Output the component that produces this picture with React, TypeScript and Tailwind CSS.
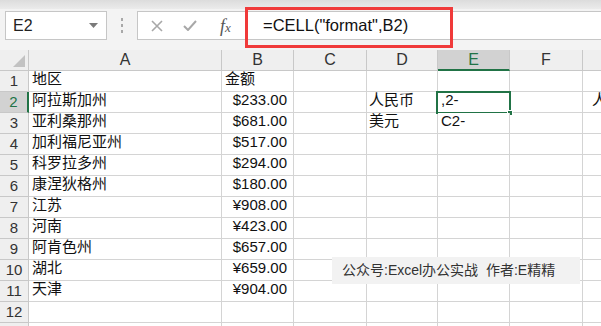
import React from 'react';

const FONT = { fontFamily: '"Liberation Sans", "Noto Sans CJK SC", sans-serif' };

const regions = ['地区', '阿拉斯加州', '亚利桑那州', '加利福尼亚州', '科罗拉多州', '康涅狄格州', '江苏', '河南', '阿肯色州', '湖北', '天津'];
const amounts = ['金额', '$233.00', '$681.00', '$517.00', '$294.00', '$180.00', '¥908.00', '¥423.00', '$657.00', '¥659.00', '¥904.00'];
const colLetters = ['A', 'B', 'C', 'D', 'E', 'F', ''];

const cellBase = 'h-[21px] border-r border-b border-[#d4d4d4] bg-white text-[15px] text-[#111] flex items-end pb-[1px] overflow-visible whitespace-nowrap';

export default function App() {
  const rows = Array.from({ length: 13 }, (_, i) => i + 1);

  return (
    <div className="relative w-[601px] h-[326px] overflow-hidden bg-white" style={FONT}>
      {/* toolbar */}
      <div className="h-[50px] bg-[#f3f3f3] flex flex-col">
        <div className="h-[9px] bg-gradient-to-b from-[#dcdcdc] to-[#ebebeb]" />
        <div className="flex items-start pt-[2px]">
          <div className="ml-[5px] w-[102px] h-[29px] bg-white border border-[#c6c6c6] flex items-center justify-between pl-[7px] pr-[8px]">
            <span className="text-[16px] text-[#222]">E2</span>
            <svg width="9" height="5" viewBox="0 0 9 5"><path d="M0 0h9L4.5 5z" fill="#7a7a7a" /></svg>
          </div>
          <div className="w-[30px] h-[29px] flex flex-col items-center justify-center gap-[3px]">
            <div className="w-[2px] h-[3px] bg-[#a8a8a8]" />
            <div className="w-[2px] h-[3px] bg-[#a8a8a8]" />
            <div className="w-[2px] h-[3px] bg-[#a8a8a8]" />
          </div>
          <div className="flex-1 h-[29px] bg-white border border-r-0 border-[#c6c6c6] flex items-center">
            <div className="w-[108px] flex items-center">
              <svg className="ml-[13px]" width="12" height="12" viewBox="0 0 12 12">
                <path d="M1 1L11 11M11 1L1 11" stroke="#a8a8a8" strokeWidth="1.6" />
              </svg>
              <svg className="ml-[20px]" width="14" height="11" viewBox="0 0 14 11">
                <path d="M1 6l4 4L13 1" stroke="#a8a8a8" strokeWidth="2" fill="none" />
              </svg>
              <span className="ml-[23px] text-[18px] italic text-[#555] leading-none" style={{ fontFamily: '"Liberation Serif", serif' }}>
                f<span className="text-[13px]">x</span>
              </span>
            </div>
            <span className="ml-[17px] text-[16.5px] text-[#111]">=CELL("format",B2)</span>
          </div>
        </div>
      </div>

      {/* red highlight around formula */}
      <div className="absolute left-[245px] top-[7px] w-[208px] h-[41px] border-[3px] border-[#f03a3a]" />

      {/* sheet */}
      <div className="grid grid-cols-[29px_193px_72px_73px_71px_72px_73px_1fr]">
        {/* header row */}
        <div className="h-[21px] bg-[#efefef] border-r border-b border-[#c8c8c8] relative">
          <svg className="absolute right-[3px] bottom-[3px]" width="12" height="12" viewBox="0 0 12 12">
            <path d="M12 0V12H0z" fill="#c2c2c2" />
          </svg>
        </div>
        {colLetters.map((c, i) => (
          <div
            key={i}
            className={
              c === 'E'
                ? 'h-[21px] bg-[#d2d2d2] border-r border-[#c8c8c8] border-b-2 border-b-[#217346] flex items-center justify-center text-[16px] text-[#217346]'
                : 'h-[21px] bg-[#efefef] border-r border-b border-[#c8c8c8] flex items-center justify-center text-[16px] text-[#333]'
            }
          >
            {c}
          </div>
        ))}

        {rows.map((r) => {
          const a = regions[r - 1] ?? '';
          const b = amounts[r - 1] ?? '';
          const sel = r === 2;
          return (
            <React.Fragment key={r}>
              <div
                className={
                  sel
                    ? 'h-[21px] bg-[#d2d2d2] border-b border-[#c8c8c8] border-r-2 border-r-[#217346] flex items-center justify-center text-[15px] text-[#217346]'
                    : 'h-[21px] bg-[#efefef] border-r border-b border-[#c8c8c8] flex items-center justify-center text-[15px] text-[#333]'
                }
              >
                {r < 13 ? r : ''}
              </div>
              <div className={`${cellBase} pl-[3px]`}>{a}</div>
              <div className={`${cellBase} ${r === 1 ? 'pl-[3px]' : 'justify-end pr-[6px] text-[14.5px]'}`}>{b}</div>
              <div className={cellBase} />
              <div className={`${cellBase} pl-[2px]`}>{r === 2 ? '人民币' : r === 3 ? '美元' : ''}</div>
              <div className={`${cellBase} pl-[3px] relative`}>
                {r === 2 ? ',2-' : r === 3 ? 'C2-' : ''}
                {sel && (
                  <div className="absolute left-[-2px] top-[-1px] w-[75px] h-[23px] border-2 border-[#217346]">
                    <div className="absolute right-[-4px] bottom-[-4px] w-[6px] h-[6px] bg-[#217346] border border-white" />
                  </div>
                )}
              </div>
              <div className={cellBase} />
              <div className={`${cellBase} pl-[9px]`}>{r === 2 ? '人民币' : ''}</div>
            </React.Fragment>
          );
        })}
      </div>

      {/* watermark text box */}
      <div className="absolute left-[332px] top-[257px] w-[248px] h-[27px] bg-[#f2f2f2] flex items-center pl-[10px] text-[14px] text-[#333]">
        公众号:Excel办公实战&nbsp;&nbsp;作者:E精精
      </div>
    </div>
  );
}
